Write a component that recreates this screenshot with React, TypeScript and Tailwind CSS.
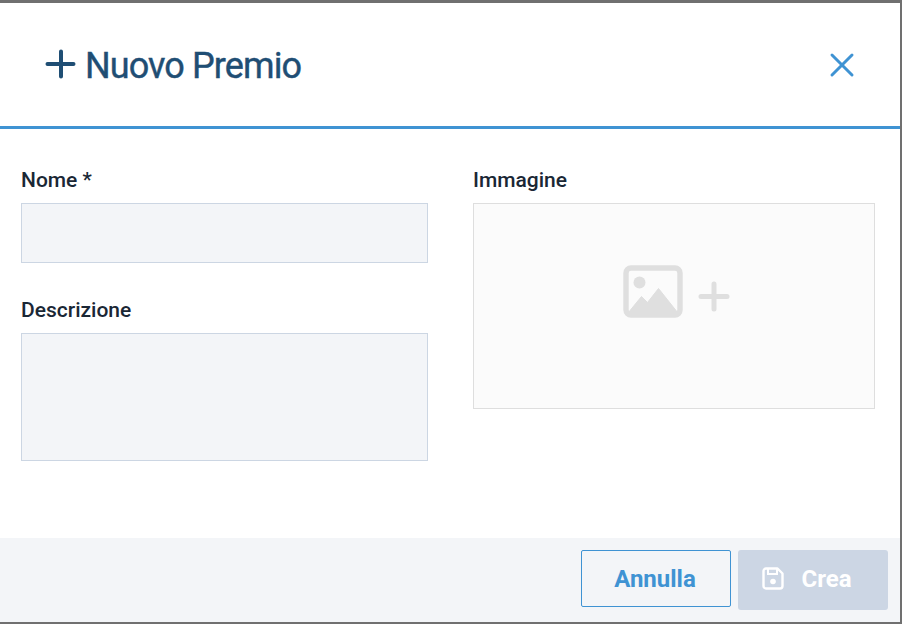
import React from "react";
import { X } from "lucide-react";

const labelClass = "block text-[21px] leading-[24px] font-medium text-[#1a2735] mb-[11px]";

export default function App() {
  return (
    <div className="w-[902px] h-[624px] bg-[#707070] pt-[3px] pr-[2px] pb-[2px] overflow-hidden font-['Roboto',sans-serif]">
      <div className="flex flex-col h-full bg-white">

        {/* Header */}
        <div className="flex items-center justify-between h-[126px] pl-[44px] pr-[38px] border-b-[3px] border-[#3f93d3] shrink-0">
          <div className="flex items-center gap-[7px] text-[#1f4e74]">
            <svg width="34" height="34" viewBox="0 0 34 34" className="shrink-0">
              <path d="M17 3.5v25M3.5 16h26" stroke="#1f4e74" strokeWidth="4" strokeLinecap="round" fill="none" />
            </svg>
            <h1 className="text-[36px] leading-[40px] font-normal tracking-[-0.9px] pt-[2px] [-webkit-text-stroke:0.4px_#1f4e74]">Nuovo Premio</h1>
          </div>
          <button className="text-[#3f93d3]">
            <X className="w-[40px] h-[40px]" strokeWidth={1.8} />
          </button>
        </div>

        {/* Form */}
        <div className="flex-1 flex gap-[45px] pl-[21px] pr-[25px] pt-[39px]">
          <div className="w-[407px]">
            <label className={labelClass}>Nome *</label>
            <div className="h-[60px] bg-[#f3f5f8] border border-[#ccd6e3] mb-[35px]" />
            <label className={labelClass}>Descrizione</label>
            <div className="h-[128px] bg-[#f3f5f8] border border-[#ccd6e3]" />
          </div>
          <div className="w-[402px]">
            <label className={labelClass}>Immagine</label>
            <div className="h-[206px] bg-[#fbfbfb] border border-[#dedede] flex items-center justify-center">
              <svg width="110" height="56" viewBox="0 0 110 56" className="mb-[26px] ml-[7px]">
                <rect x="3" y="3" width="54" height="47" rx="5" fill="none" stroke="#dfdfdf" strokeWidth="5.4" />
                <circle cx="16.5" cy="17.5" r="6" fill="#dfdfdf" />
                <path d="M5 48 L18.5 31.5 L24.5 37.5 L35.5 23.5 L55 48 Z" fill="#dfdfdf" stroke="#dfdfdf" strokeWidth="1" strokeLinejoin="round" />
                <path d="M91 19v25M78 31.5h26" stroke="#dfdfdf" strokeWidth="5" strokeLinecap="round" fill="none" />
              </svg>
            </div>
          </div>
        </div>

        {/* Footer */}
        <div className="flex items-start justify-end gap-[7px] h-[84px] pt-[12px] pr-[12px] bg-[#f3f5f8] shrink-0">
          <button className="w-[150px] h-[57px] rounded-[2px] border border-[#3f93d3] text-[#3f93d3] text-[24px] font-bold pr-[2px]">
            Annulla
          </button>
          <button disabled className="w-[150px] h-[60px] rounded-[3px] bg-[#ccd6e4] text-white text-[24px] font-bold flex items-center justify-center gap-[17px] pb-[3px] pr-[12px]">
            <svg width="22" height="23" viewBox="0 0 22 23" fill="none" className="shrink-0">
              <path d="M4 1.5h11.5l5 5V19a2.5 2.5 0 0 1-2.5 2.5H4A2.5 2.5 0 0 1 1.5 19V4A2.5 2.5 0 0 1 4 1.5Z" stroke="white" strokeWidth="2.4" strokeLinejoin="round" />
              <path d="M6 2v5h9V2" stroke="white" strokeWidth="2" />
              <circle cx="11" cy="14.5" r="2.8" fill="white" />
            </svg>
            Crea
          </button>
        </div>

      </div>
    </div>
  );
}
